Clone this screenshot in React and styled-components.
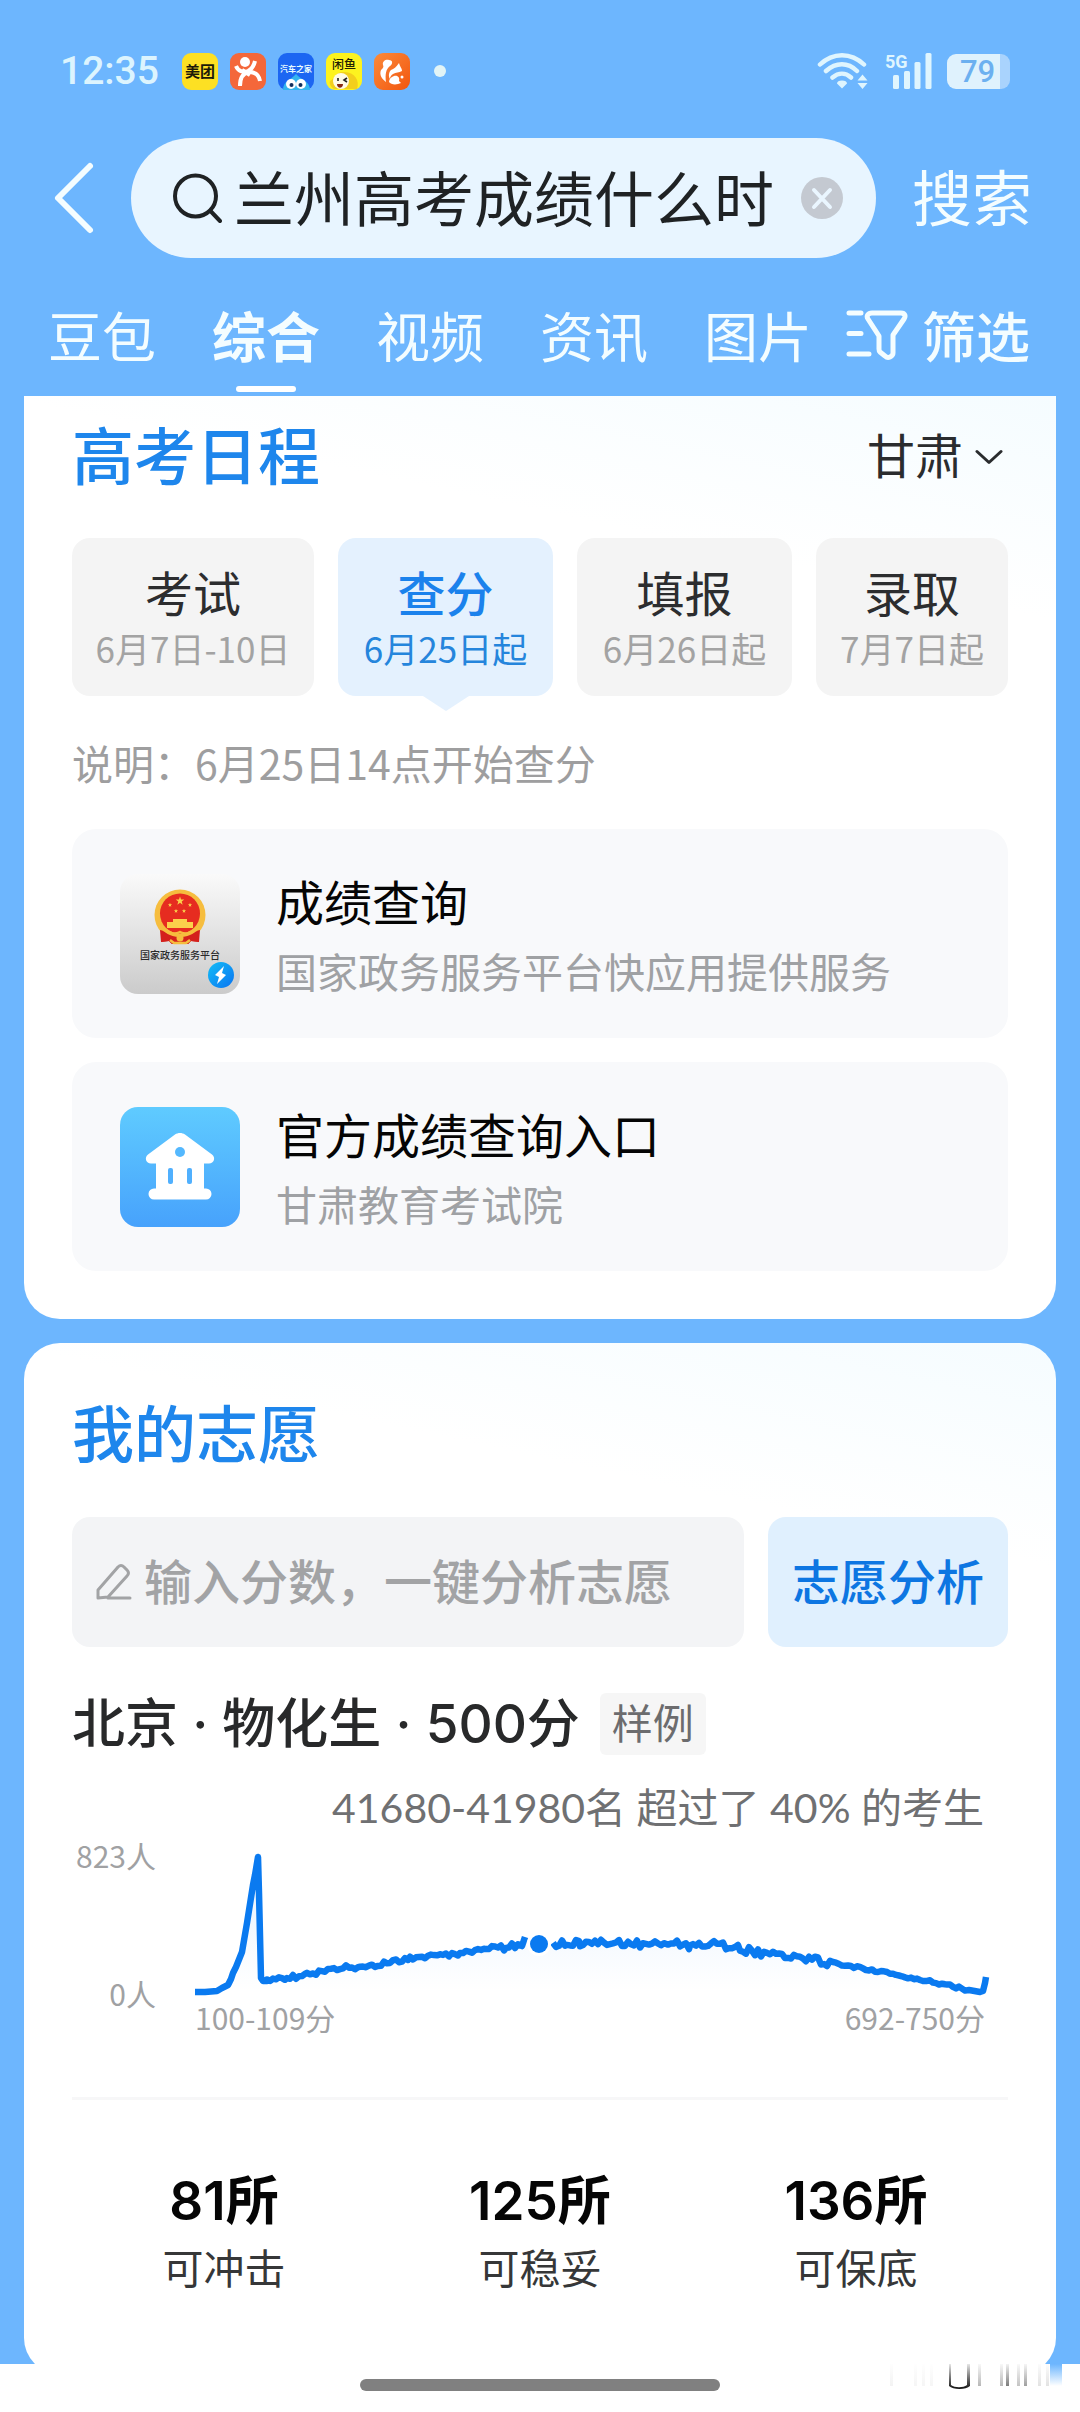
import React from "react";
import styled, { createGlobalStyle } from "styled-components";

const cjk = '"Noto Sans CJK SC", sans-serif';
const mixed = 'Inter, "Noto Sans CJK SC", sans-serif';
const rounded = 'Lato, "Noto Sans CJK SC", sans-serif';
const blue = "#6db6fe";

const GlobalStyle = createGlobalStyle`
  * { box-sizing: border-box; }
  body { margin: 0; background: ${blue}; font-family: ${cjk}; }
  button, input { font-family: inherit; border: 0; padding: 0; background: none; outline: none; }
  button { cursor: pointer; }
  h2, h3, p { margin: 0; }
  svg { display: block; flex: none; }
`;

const Page = styled.div`
  min-height: 100vh;
  background: ${blue};
`;

/* ---------- status bar ---------- */

const StatusBar = styled.div`
  display: flex;
  align-items: center;
  justify-content: space-between;
  height: 138px;
  padding: 4px 70px 0 60px;
`;

const StatusGroup = styled.div`
  display: flex;
  align-items: center;
  gap: ${(p) => p.$gap}px;
`;

const Clock = styled.span`
  width: 110px;
  color: #dcf4fe;
  font: 500 39px/48px Roboto, sans-serif;
`;

const MoreDot = styled.span`
  width: 12px;
  height: 12px;
  margin-left: 12px;
  border-radius: 50%;
  background: #e2f4f6;
`;

const Battery = styled.span`
  display: flex;
  align-items: center;
  justify-content: center;
  width: 63px;
  height: 35px;
  padding-right: 2px;
  border-radius: 9px;
  background: linear-gradient(90deg, #dff2fd 53px, #a9d3fd 53px);
  color: #6cb0f0;
  font: 500 31px/35px Roboto, sans-serif;
`;

/* ---------- search header ---------- */

const SearchForm = styled.form`
  display: flex;
  align-items: center;
  padding: 0 48px 0 52px;
`;

const BackButton = styled.button`
  width: 79px;
`;

const SearchBox = styled.label`
  display: flex;
  flex: 1;
  align-items: center;
  gap: 12px;
  min-width: 0;
  height: 120px;
  padding: 0 33px 0 42px;
  border-radius: 60px;
  background: #e8f5ff;
`;

const SearchInput = styled.input`
  flex: 1;
  min-width: 0;
  height: 94px;
  padding-bottom: 6px;
  color: #1f2224;
  font-size: 60px;
  line-height: 88px;
`;

const SearchButton = styled.button`
  margin-left: 36px;
  padding-bottom: 6px;
  color: #f4fdff;
  font-size: 60px;
  line-height: 72px;
`;

const TabBar = styled.nav`
  display: flex;
  align-items: flex-start;
  justify-content: space-between;
  padding: 47px 50px 4px 48px;
`;

const TabList = styled.div`
  display: flex;
  gap: 56px;
`;

const Tab = styled.a`
  display: flex;
  flex-direction: column;
  align-items: center;
  gap: 21px;
  color: #f4fdff;
  font-size: 54px;
  font-weight: ${(p) => (p.$active ? 700 : 400)};
  line-height: 60px;
  text-decoration: none;

  &::after {
    content: "";
    width: 60px;
    height: 6px;
    border-radius: 3px;
    background: ${(p) => (p.$active ? "#fff" : "transparent")};
  }
`;

const FilterButton = styled.button`
  display: flex;
  align-items: center;
  gap: 14px;
  color: #f4fdff;
  font-size: 54px;
  font-weight: 500;
  line-height: 60px;
`;

/* ---------- cards ---------- */

const Feed = styled.main`
  display: flex;
  flex-direction: column;
  gap: 24px;
  padding: 0 24px;
`;

const Card = styled.section`
  padding: ${(p) => (p.$cut ? "21px 48px 48px" : "52px 48px 80px")};
  border-radius: ${(p) => (p.$cut ? "0 0 36px 36px" : "36px")};
  background: linear-gradient(192deg, #f5fcff 0, #fff 220px);
`;

const CardHeader = styled.header`
  display: flex;
  align-items: center;
  justify-content: space-between;
`;

const CardTitle = styled.h2`
  color: #1e86ec;
  font-size: 62px;
  font-weight: 500;
  line-height: 72px;
`;

const RegionButton = styled.button`
  display: flex;
  align-items: center;
  gap: 12px;
  padding-right: 5px;
  color: #2a2c2e;
  font-size: 48px;
  line-height: 60px;

  svg {
    margin-top: 8px;
  }
`;

const Steps = styled.div`
  display: grid;
  grid-template-columns: 242fr 215fr 215fr 192fr;
  gap: 24px;
  margin-top: 49px;
`;

const Step = styled.button`
  position: relative;
  display: flex;
  flex-direction: column;
  align-items: center;
  gap: 4px;
  padding: 24px 0;
  border-radius: 18px;
  background: ${(p) => (p.$active ? "#e4f1fe" : "#f4f4f4")};
  white-space: nowrap;

  &::after {
    content: "";
    display: ${(p) => (p.$active ? "block" : "none")};
    position: absolute;
    top: 100%;
    left: 50%;
    margin-left: -23px;
    border: 23px solid transparent;
    border-top: 15px solid #e4f1fe;
    border-bottom: 0;
  }
`;

const StepName = styled.span`
  color: ${(p) => (p.$active ? "#1b82ec" : "#2c2d2f")};
  font-size: 48px;
  font-weight: ${(p) => (p.$active ? 500 : 400)};
  line-height: 58px;
`;

const StepDate = styled.span`
  color: ${(p) => (p.$active ? "#2585dc" : "#a3a3a3")};
  font-size: 35px;
  line-height: 48px;
`;

const Note = styled.p`
  margin: 38px 0 39px;
  color: #9e9e9f;
  font-size: 41px;
  line-height: 56px;
`;

const Services = styled.div`
  display: flex;
  flex-direction: column;
  gap: 24px;
`;

const Service = styled.a`
  display: flex;
  align-items: center;
  gap: 36px;
  height: 209px;
  padding: 0 48px;
  border-radius: 24px;
  background: #f8f9fb;
  text-decoration: none;
`;

const ServiceText = styled.div`
  display: flex;
  flex-direction: column;
  gap: 12px;
`;

const ServiceName = styled.h3`
  color: #050505;
  font-size: 48px;
  font-weight: 400;
  line-height: 60px;
`;

const ServiceSource = styled.p`
  color: #9fa1a4;
  font-size: 41px;
  line-height: 56px;
`;

const ScoreForm = styled.form`
  display: flex;
  gap: 24px;
  margin-top: 50px;
`;

const ScoreBox = styled.label`
  display: flex;
  flex: 1;
  align-items: center;
  gap: 12px;
  min-width: 0;
  height: 130px;
  padding: 0 24px;
  border-radius: 18px;
  background: #f3f4f6;
`;

const ScoreInput = styled.input`
  flex: 1;
  min-width: 0;
  height: 78px;
  padding-bottom: 6px;
  color: #2a2c2e;
  font-size: 48px;
  font-weight: 500;

  &::placeholder {
    color: #a2a3a5;
    opacity: 1;
  }
`;

const AnalyseButton = styled.button`
  padding: 0 24px 6px;
  border-radius: 18px;
  background: #e0f0fe;
  color: #0d76e2;
  font-size: 48px;
  font-weight: 500;
`;

const Sample = styled.div`
  display: flex;
  gap: 20px;
  margin-top: 46px;
`;

const SampleTitle = styled.h3`
  color: #28292a;
  font-family: ${mixed};
  font-size: 53px;
  font-weight: 500;
  line-height: 62px;
`;

const SampleTag = styled.span`
  padding: 0 12px;
  border-radius: 6px;
  background: #f6f6f6;
  color: #6c6c6e;
  font-size: 41px;
  line-height: 56px;
  height: 62px;
`;

const Caption = styled.p`
  margin-top: 25px;
  padding-right: 24px;
  color: #6f7072;
  font-family: ${rounded};
  font-size: 41px;
  line-height: 56px;
  text-align: right;
`;

const Chart = styled.figure`
  display: flex;
  gap: 39px;
  margin: 0;
  padding-right: 20px;
  color: #a0a1a3;
  font-size: 30px;
  line-height: 38px;
`;

const AxisY = styled.div`
  display: flex;
  flex-direction: column;
  justify-content: space-between;
  width: 84px;
  height: 176px;
  text-align: right;
`;

const Plot = styled.div`
  flex: 1;
  padding-top: 9px;

  svg {
    width: 100%;
    height: 153px;
    overflow: visible;
  }
`;

const AxisX = styled.div`
  display: flex;
  justify-content: space-between;
  padding-right: 3px;
`;

const Divider = styled.hr`
  height: 3px;
  margin: 61px 0 68px;
  border: 0;
  background: #f7f7f8;
`;

const Stats = styled.div`
  display: grid;
  grid-template-columns: repeat(3, 1fr);
  gap: 12px;
`;

const Stat = styled.div`
  display: flex;
  flex-direction: column;
  align-items: center;
  gap: 4px;
`;

const StatValue = styled.strong`
  color: #050505;
  font-family: ${mixed};
  font-size: 53px;
  font-weight: 600;
  line-height: 66px;
`;

const StatLabel = styled.span`
  color: #363738;
  font-size: 41px;
  line-height: 56px;
`;

/* ---------- gesture bar ---------- */

const GestureBar = styled.div`
  position: fixed;
  right: 0;
  bottom: 0;
  left: 0;
  display: flex;
  justify-content: center;
  height: 48px;
  padding-top: 15px;
  background: #fff;
`;

const Handle = styled.span`
  width: 33.33%;
  height: 12px;
  border-radius: 6px;
  background: #808080;
`;

const Smear = styled.svg`
  position: absolute;
  right: 18px;
  bottom: 20px;
`;

/* ---------- drawings ---------- */

const MeituanIcon = () => (
  <svg width="36" height="37" viewBox="0 0 36 37">
    <rect width="36" height="37" rx="9" fill="#fde023" />
    <text x="18" y="24" textAnchor="middle" fontSize="15" fontWeight="700" fill="#1c1a08">美团</text>
  </svg>
);

const DianpingIcon = () => (
  <svg width="36" height="37" viewBox="0 0 36 37">
    <rect width="36" height="37" rx="9" fill="#f4673a" />
    <circle cx="15" cy="9" r="5" fill="#fff" />
    <path d="M6 13c2 5 7 7 12 5 4-2 6-5 7-10" fill="none" stroke="#fff" strokeWidth="4" />
    <path d="M10 33c0-8 3-13 9-14 6 0 10 3 11 9M12 17l8 5" fill="none" stroke="#fff" strokeWidth="4" />
  </svg>
);

const AutohomeIcon = () => (
  <svg width="36" height="37" viewBox="0 0 36 37">
    <rect width="36" height="37" rx="9" fill="#1c66f2" />
    <path d="M5 37c0-9 8-10 13-16 5 6 14 7 14 16z" fill="#35b5ee" />
    <circle cx="13" cy="31" r="5" fill="#fff" />
    <circle cx="23" cy="31" r="5" fill="#fff" />
    <circle cx="13.500" cy="32" r="2" fill="#12305e" />
    <circle cx="22.500" cy="32" r="2" fill="#12305e" />
    <text x="18" y="19" textAnchor="middle" fontSize="8" fontWeight="700" fill="#e8fbff">汽车之家</text>
  </svg>
);

const XianyuIcon = () => (
  <svg width="36" height="37" viewBox="0 0 36 37">
    <rect width="36" height="37" rx="9" fill="#fdf31f" />
    <text x="18" y="16" textAnchor="middle" fontSize="12" fontWeight="500" fill="#222004">闲鱼</text>
    <path d="M4 28c4-1 4-9 14-9 11 0 16 9 13 17H8c-3-2-5-5-4-8z" fill="#f3cf1c" />
    <circle cx="15" cy="28" r="8" fill="#fffbe6" />
    <path d="M12 25v3M21 25l-3 2 3 2" fill="none" stroke="#222" strokeWidth="1.600" />
    <path d="M11 31h6c0 5-6 5-6 0z" fill="#8a2a12" />
  </svg>
);

const SquirrelIcon = () => (
  <svg width="36" height="37" viewBox="0 0 36 37">
    <defs>
      <linearGradient id="sq" x1="0" y1="0" x2="1" y2="1">
        <stop offset="0" stopColor="#fb8a3a" />
        <stop offset="1" stopColor="#f2560f" />
      </linearGradient>
    </defs>
    <rect width="36" height="37" rx="9" fill="url(#sq)" />
    <path d="M12 29c-4-3-7-7-5-12 2-2 3-3 2-5-1-4 3-6 6-5 4 0 4 4 1 6-4 3-5 8-4 16z" fill="#fff" />
    <path d="M17 17c3-1 5-3 8-7 1 4 3 5 3 8-3 2-6 1-9 3-2 1-3 3-3 5-2-3-1-7 1-9z" fill="#fff" />
    <path d="M20 23c4-1 6 2 5 5l2 2c-4 2-10 2-12-1 0-3 2-5 5-6z" fill="#fff" />
    <circle cx="28" cy="24" r="1.500" fill="#fff" />
  </svg>
);

const WifiIcon = () => (
  <svg width="52" height="38" viewBox="0 0 52 38" fill="none" stroke="#dff5fe" strokeWidth="4.500" strokeLinecap="round">
    <path d="M3 12.500C16 0 34 0 47 12.500M9 19C19 10 31 10 40 19M15.500 25.500c6-5 13-5 18.500 0" />
    <path d="M25 28.500c3 0 5 1 5 3L25 36.500l-5-5c0-2 2-3 5-3z" fill="#dff5fe" stroke="none" />
    <path d="M45.500 22.500l5 6h-10zM45.500 37l5-6h-10z" fill="#dff5fe" stroke="none" />
  </svg>
);

const SignalIcon = () => (
  <svg width="48" height="38" viewBox="0 0 48 38" fill="#dff5fe">
    <text x="1" y="16" fontFamily="Roboto, sans-serif" fontWeight="700" fontSize="18">5G</text>
    <rect x="9" y="23" width="6" height="14" rx="1.500" />
    <rect x="20" y="19" width="6" height="18" rx="1.500" />
    <rect x="30.500" y="10" width="6" height="27" rx="1.500" />
    <rect x="41.500" y="1" width="6" height="36" rx="1.500" />
  </svg>
);

const BackIcon = () => (
  <svg width="44" height="76" viewBox="0 0 44 76" fill="none" stroke="#f4fdff" strokeWidth="6" strokeLinecap="round" strokeLinejoin="round">
    <path d="M38 6L6 38l32 32" />
  </svg>
);

const SearchIcon = () => (
  <svg width="49" height="52" viewBox="0 0 49 52" fill="none" stroke="#1f2224" strokeWidth="4" strokeLinecap="round">
    <circle cx="22.500" cy="24" r="20.500" />
    <path d="M37.500 39L47 49" />
  </svg>
);

const ClearIcon = () => (
  <svg width="42" height="42" viewBox="0 0 42 42">
    <circle cx="21" cy="21" r="21" fill="#c4c9d1" />
    <path d="M13 13l16 17M29 13L13 30" stroke="#eaf6ff" strokeWidth="4" strokeLinecap="round" />
  </svg>
);

const FilterIcon = () => (
  <svg width="62" height="52" viewBox="0 0 62 52" fill="none" stroke="#f4fdff" strokeWidth="5" strokeLinecap="round" strokeLinejoin="round">
    <path d="M3 4h12M3 24.500h12M3 45h20" />
    <path d="M26 4h29c4 0 5 3 3 6L47 26v18c0 2-1 3-3 4s-4 0-5-1l-5-4c-1-1-1-2-1-3V27L22 10c-2-3 0-6 4-6z" />
  </svg>
);

const ChevronIcon = () => (
  <svg width="28" height="16" viewBox="0 0 28 16" fill="none" stroke="#2a2c2e" strokeWidth="3" strokeLinecap="round" strokeLinejoin="round">
    <path d="M2 2.500l12 11 12-11" />
  </svg>
);

const EditIcon = () => (
  <svg width="36" height="36" viewBox="0 0 36 36" fill="none" stroke="#a2a3a5" strokeWidth="3" strokeLinecap="round" strokeLinejoin="round">
    <path d="M2 34v-8L22 3c2-2 4-2 6 0l3 3c2 2 2 4 0 6L12 33zM12 34h22" />
  </svg>
);

const star = (cx, cy, r) =>
  Array.from({ length: 10 }, (_, i) => {
    const a = -Math.PI / 2 + (i * Math.PI) / 5;
    const d = i % 2 ? r * 0.4 : r;
    return `${cx + d * Math.cos(a)},${cy + d * Math.sin(a)}`;
  }).join(" ");

const GovIcon = () => (
  <svg width="120" height="120" viewBox="0 0 120 120">
    <defs>
      <linearGradient id="gov" x1="0" y1="0" x2="0" y2="1">
        <stop offset="0" stopColor="#fafafa" />
        <stop offset="1" stopColor="#cbcbcb" />
      </linearGradient>
      <linearGradient id="bolt" x1="0" y1="0" x2="1" y2="1">
        <stop offset="0" stopColor="#12bdf6" />
        <stop offset="1" stopColor="#0b74f2" />
      </linearGradient>
    </defs>
    <rect width="120" height="120" rx="18" fill="url(#gov)" />
    <path d="M42 50h36l1 18-8-1-3 3H52l-3-3-8 1z" fill="#d4201c" />
    <circle cx="60" cy="41" r="25.500" fill="#f6bd3e" />
    <circle cx="60" cy="39.500" r="20" fill="#e62c20" />
    <polygon points={star(60, 27, 4.5)} fill="#fbd14b" />
    {[[50, 31], [56, 37], [64, 37], [70, 31]].map(([x, y]) => (
      <polygon key={x} points={star(x, y, 2.2)} fill="#fbd14b" />
    ))}
    <path d="M53 45h14v3h6v6H47v-6h6z" fill="#fbd14b" />
    <path d="M40 56c6 1 8 7 20 7s14-6 20-7l-1 12-8-1-3 3H52l-3-3-8 1z" fill="#d4201c" />
    <path d="M42 54c6 3 10 8 18 4 8 4 12-1 18-4M50 66l4 3h12l4-3" fill="none" stroke="#f6bd3e" strokeWidth="2.500" />
    <circle cx="60" cy="64" r="3.500" fill="#f6bd3e" />
    <text x="60" y="85" textAnchor="middle" fontSize="10" fontWeight="500" fill="#2a2a2a">国家政务服务平台</text>
    <circle cx="101" cy="101" r="13" fill="url(#bolt)" />
    <path d="M104 92l-9 9 4 2-2 7 9-9-4-2z" fill="#fff" />
  </svg>
);

const InstituteIcon = () => (
  <svg width="120" height="120" viewBox="0 0 120 120">
    <defs>
      <linearGradient id="inst" x1="0" y1="0" x2="0" y2="1">
        <stop offset="0" stopColor="#5fcbff" />
        <stop offset="1" stopColor="#47a2fc" />
      </linearGradient>
    </defs>
    <rect width="120" height="120" rx="18" fill="url(#inst)" />
    <path d="M55 27.500c3-2 7-2 10 0l27 20c4 3 2 9-3 9h-5v25h2a5 5 0 0 1 0 11H34a5 5 0 0 1 0-11h2V56.500h-5c-5 0-7-6-3-9z" fill="#fff" />
    <circle cx="60" cy="45" r="5" fill="#54b8fe" />
    <rect x="48" y="61" width="5" height="16" rx="2" fill="#50b0fe" />
    <rect x="67" y="61" width="5" height="16" rx="2" fill="#50b0fe" />
  </svg>
);

/* Distribution of candidates by score: trend points, with jitter between them. */
const rise = [
  [0, 137], [10, 137], [22, 136], [27, 133], [33, 130], [36, 124], [38, 118], [41, 112], [47, 97], [52, 68],
  [58, 30], [60, 20], [63, 2], [64, 38], [66, 123], [68, 126], [72, 126],
];
const beforeMark = [
  [72, 126], [92, 123], [112, 120], [130, 117], [145, 113], [165, 112], [192, 108],
  [215, 103], [245, 100], [265, 98], [291, 94], [311, 92], [325, 90],
];
const afterMark = [
  [358, 90], [372, 87], [385, 89], [412, 88], [445, 89], [470, 87], [495, 91], [513, 88], [545, 94], [572, 99],
  [605, 102], [635, 108], [662, 112], [695, 118], [732, 126], [752, 130], [772, 135],
];

const jitter = (points) => {
  const out = [];
  points.slice(1).forEach(([x1, y1], i) => {
    const [x0, y0] = points[i];
    for (let x = x0; x < x1; x += 3) {
      const amp = x > 640 ? 1.6 : x > 300 ? 3.6 : 2.4;
      const n = Math.sin(x * 12.9898) * 43758.5453;
      const noise = (n - Math.floor(n)) * 2 - 1;
      out.push([x, y0 + ((y1 - y0) * (x - x0)) / (x1 - x0) + noise * amp]);
    }
  });
  return out;
};

const left = [...rise, ...jitter(beforeMark), [327, 91], [330, 82]];
const right = [...jitter(afterMark), [774, 135], [785, 137], [788, 136], [790, 128], [791, 122]];
const toPath = (pts) => "M" + pts.map(([x, y]) => `${x} ${y.toFixed(1)}`).join("L");

const ScoreCurve = () => (
  <svg viewBox="0 -10 793 153" preserveAspectRatio="none" role="img" aria-label="分数分布">
    <defs>
      <linearGradient id="area" x1="0" y1="0" x2="0" y2="1">
        <stop offset="0" stopColor="#0a7bf0" stopOpacity="0.100" />
        <stop offset="1" stopColor="#0a7bf0" stopOpacity="0" />
      </linearGradient>
    </defs>
    <path d={toPath([...left, ...right]) + "V137H0Z"} fill="url(#area)" />
    <g fill="none" stroke="#0a7af0" strokeWidth="6.500" strokeLinejoin="round">
      <path d={toPath(left)} />
      <path d={toPath(right)} />
    </g>
    <circle cx="344" cy="89" r="12" fill="#fff" />
    <circle cx="344" cy="89" r="9" fill="#0a7af0" />
  </svg>
);

const streaks = [
  [8, 0.05], [32, 0.04], [40, 0.04], [48, 0.04], [96, 0.3],
  [118, 0.3], [124, 0.55], [135, 0.25], [142, 0.4], [156, 0.12], [164, 0.12],
];

const TornStrip = () => (
  <Smear width="180" height="30" viewBox="0 0 180 30" aria-hidden="true">
    <defs>
      <linearGradient id="ink" x1="0" y1="0" x2="0" y2="1">
        <stop offset="0" stopColor="#111" stopOpacity="0.100" />
        <stop offset="1" stopColor="#111" />
      </linearGradient>
      <linearGradient id="sky" x1="0" y1="0" x2="0" y2="1">
        <stop offset="0" stopColor={blue} />
        <stop offset="1" stopColor={blue} stopOpacity="0" />
      </linearGradient>
    </defs>
    <rect x="168" y="2" width="12" height="22" fill="url(#sky)" />
    {streaks.map(([x, o]) => (
      <rect key={x} x={x} y="2" width="3" height="22" fill="url(#ink)" opacity={o} />
    ))}
    <path d="M67 2v22c4 4 17 4 21 0V2h-3v21c-4 3-12 3-16 0V2z" fill="url(#ink)" />
  </Smear>
);

/* ---------- page ---------- */

const tabs = ["豆包", "综合", "视频", "资讯", "图片"];
const steps = [
  ["考试", "6月7日-10日"],
  ["查分", "6月25日起"],
  ["填报", "6月26日起"],
  ["录取", "7月7日起"],
];
const stats = [
  ["81所", "可冲击"],
  ["125所", "可稳妥"],
  ["136所", "可保底"],
];

export default function App() {
  return (
    <Page>
      <GlobalStyle />
      <StatusBar>
        <StatusGroup $gap={12}>
          <Clock>12:35</Clock>
          <MeituanIcon />
          <DianpingIcon />
          <AutohomeIcon />
          <XianyuIcon />
          <SquirrelIcon />
          <MoreDot />
        </StatusGroup>
        <StatusGroup $gap={15}>
          <WifiIcon />
          <SignalIcon />
          <Battery>79</Battery>
        </StatusGroup>
      </StatusBar>

      <SearchForm onSubmit={(e) => e.preventDefault()}>
        <BackButton type="button" aria-label="返回">
          <BackIcon />
        </BackButton>
        <SearchBox>
          <SearchIcon />
          <SearchInput type="text" aria-label="搜索内容" defaultValue="兰州高考成绩什么时" />
          <button type="button" aria-label="清除">
            <ClearIcon />
          </button>
        </SearchBox>
        <SearchButton type="submit">搜索</SearchButton>
      </SearchForm>

      <TabBar>
        <TabList>
          {tabs.map((name) => (
            <Tab key={name} href="#" $active={name === "综合"}>
              {name}
            </Tab>
          ))}
        </TabList>
        <FilterButton type="button">
          <FilterIcon />
          筛选
        </FilterButton>
      </TabBar>

      <Feed>
        <Card $cut>
          <CardHeader>
            <CardTitle>高考日程</CardTitle>
            <RegionButton type="button">
              甘肃
              <ChevronIcon />
            </RegionButton>
          </CardHeader>
          <Steps>
            {steps.map(([name, date]) => (
              <Step key={name} type="button" $active={name === "查分"}>
                <StepName $active={name === "查分"}>{name}</StepName>
                <StepDate $active={name === "查分"}>{date}</StepDate>
              </Step>
            ))}
          </Steps>
          <Note>说明：6月25日14点开始查分</Note>
          <Services>
            <Service href="#">
              <GovIcon />
              <ServiceText>
                <ServiceName>成绩查询</ServiceName>
                <ServiceSource>国家政务服务平台快应用提供服务</ServiceSource>
              </ServiceText>
            </Service>
            <Service href="#">
              <InstituteIcon />
              <ServiceText>
                <ServiceName>官方成绩查询入口</ServiceName>
                <ServiceSource>甘肃教育考试院</ServiceSource>
              </ServiceText>
            </Service>
          </Services>
        </Card>

        <Card>
          <CardTitle>我的志愿</CardTitle>
          <ScoreForm onSubmit={(e) => e.preventDefault()}>
            <ScoreBox>
              <EditIcon />
              <ScoreInput type="text" aria-label="分数" placeholder="输入分数，一键分析志愿" />
            </ScoreBox>
            <AnalyseButton type="submit">志愿分析</AnalyseButton>
          </ScoreForm>
          <Sample>
            <SampleTitle>北京 · 物化生 · 500分</SampleTitle>
            <SampleTag>样例</SampleTag>
          </Sample>
          <Caption>41680-41980名 超过了 40% 的考生</Caption>
          <Chart>
            <AxisY>
              <span>823人</span>
              <span>0人</span>
            </AxisY>
            <Plot>
              <ScoreCurve />
              <AxisX>
                <span>100-109分</span>
                <span>692-750分</span>
              </AxisX>
            </Plot>
          </Chart>
          <Divider />
          <Stats>
            {stats.map(([value, label]) => (
              <Stat key={label}>
                <StatValue>{value}</StatValue>
                <StatLabel>{label}</StatLabel>
              </Stat>
            ))}
          </Stats>
        </Card>
      </Feed>

      <GestureBar>
        <Handle />
        <TornStrip />
      </GestureBar>
    </Page>
  );
}
